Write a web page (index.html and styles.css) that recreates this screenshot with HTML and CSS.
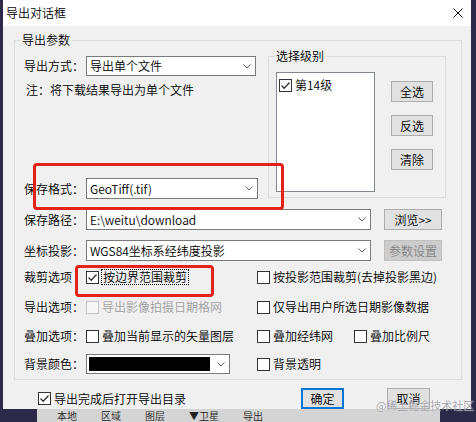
FILE: index.html
```html
<!DOCTYPE html>
<html lang="zh-CN">
<head>
    <meta charset="UTF-8">
    <meta name="viewport" content="width=device-width, initial-scale=1.0">
    <title>导出对话框</title>
    <link rel="stylesheet" href="styles.css">
</head>
<body>
    <div class="window">
        <div class="titlebar">
            <span class="title">导出对话框</span>
            <svg class="close" viewBox="0 0 10 10"><path d="M0.5 0.5L9.5 9.5M9.5 0.5L0.5 9.5"/></svg>
        </div>
        <div class="content">
            <fieldset class="group main-group">
                <legend>导出参数</legend>
                <div class="top">
                    <div class="top-left">
                        <div class="row row-mode">
                            <span class="label">导出方式：</span>
                            <div class="combo combo-mode">
                                <span>导出单个文件</span>
                                <svg class="arrow" viewBox="0 0 8 5"><polyline points="0.5,0.5 4,4 7.5,0.5"/></svg>
                            </div>
                        </div>
                        <div class="note">注：将下载结果导出为单个文件</div>
                        <div class="row row-format">
                            <span class="label">保存格式：</span>
                            <div class="combo combo-format">
                                <span>GeoTiff(.tif)</span>
                                <svg class="arrow" viewBox="0 0 8 5"><polyline points="0.5,0.5 4,4 7.5,0.5"/></svg>
                            </div>
                        </div>
                    </div>
                    <fieldset class="group level-group">
                        <legend>选择级别</legend>
                        <div class="level-body">
                            <div class="listbox">
                                <label class="check">
                                    <span class="box"><svg viewBox="0 0 11 11"><polyline points="1.5,5.5 4.2,8.2 9.5,2.5"/></svg></span>
                                    <span>第14级</span>
                                </label>
                            </div>
                            <div class="level-buttons">
                                <button class="btn">全选</button>
                                <button class="btn">反选</button>
                                <button class="btn">清除</button>
                            </div>
                        </div>
                    </fieldset>
                </div>

                <div class="row row-path">
                    <span class="label">保存路径：</span>
                    <div class="combo combo-wide">
                        <span>E:\weitu\download</span>
                        <svg class="arrow" viewBox="0 0 8 5"><polyline points="0.5,0.5 4,4 7.5,0.5"/></svg>
                    </div>
                    <button class="btn btn-side">浏览&gt;&gt;</button>
                </div>

                <div class="row row-proj">
                    <span class="label">坐标投影：</span>
                    <div class="combo combo-wide">
                        <span>WGS84坐标系经纬度投影</span>
                        <svg class="arrow" viewBox="0 0 8 5"><polyline points="0.5,0.5 4,4 7.5,0.5"/></svg>
                    </div>
                    <button class="btn btn-side" disabled>参数设置</button>
                </div>

                <div class="row row-clip">
                    <span class="label">裁剪选项</span>
                    <label class="check opt-left">
                        <span class="box"><svg viewBox="0 0 11 11"><polyline points="1.5,5.5 4.2,8.2 9.5,2.5"/></svg></span>
                        <span class="focus">按边界范围裁剪</span>
                    </label>
                    <label class="check">
                        <span class="box"></span>
                        <span>按投影范围裁剪(去掉投影黑边)</span>
                    </label>
                </div>

                <div class="row row-export">
                    <span class="label">导出选项：</span>
                    <label class="check opt-left disabled">
                        <span class="box"></span>
                        <span>导出影像拍摄日期格网</span>
                    </label>
                    <label class="check">
                        <span class="box"></span>
                        <span>仅导出用户所选日期影像数据</span>
                    </label>
                </div>

                <div class="row row-overlay">
                    <span class="label">叠加选项：</span>
                    <label class="check opt-left">
                        <span class="box"></span>
                        <span>叠加当前显示的矢量图层</span>
                    </label>
                    <label class="check opt-grid">
                        <span class="box"></span>
                        <span>叠加经纬网</span>
                    </label>
                    <label class="check">
                        <span class="box"></span>
                        <span>叠加比例尺</span>
                    </label>
                </div>

                <div class="row row-bg">
                    <span class="label">背景颜色：</span>
                    <div class="combo combo-color">
                        <span class="swatch"></span>
                        <svg class="arrow" viewBox="0 0 8 5"><polyline points="0.5,0.5 4,4 7.5,0.5"/></svg>
                    </div>
                    <label class="check opt-bg">
                        <span class="box"></span>
                        <span>背景透明</span>
                    </label>
                </div>
            </fieldset>

            <div class="bottom">
                <label class="check open-dir">
                    <span class="box"><svg viewBox="0 0 11 11"><polyline points="1.5,5.5 4.2,8.2 9.5,2.5"/></svg></span>
                    <span>导出完成后打开导出目录</span>
                </label>
                <button class="btn btn-ok">确定</button>
                <button class="btn btn-cancel">取消</button>
            </div>
        </div>

        <div class="mark mark-format"></div>
        <div class="mark mark-clip"></div>
    </div>

    <div class="behind">
        <span>本地</span>
        <span>区域</span>
        <span>图层</span>
        <span>▼卫星</span>
        <span>导出</span>
    </div>

    <div class="watermark">@稀土掘金技术社区</div>
</body>
</html>
```

FILE: styles.css
```css
* {
    box-sizing: border-box;
}

body {
    margin: 0;
    width: 476px;
    height: 422px;
    overflow: hidden;
    position: relative;
    background-color: #2c2a48;
    font-family: "Noto Sans CJK SC", "Microsoft YaHei", sans-serif;
    font-size: 12px;
    font-weight: 350;
    line-height: 16px;
    color: #000;
}

.window {
    position: relative;
    margin-left: 3px;
    width: 468px;
    height: 409px;
    background-color: #f0f0f0;
}

.titlebar {
    height: 26px;
    background-color: #fff;
    display: flex;
    align-items: center;
    justify-content: space-between;
    padding: 0 8px 0 3px;
}

.close {
    width: 10px;
    height: 10px;
    stroke: #111;
    stroke-width: 1;
}

.content {
    padding: 6px 9px 0 11px;
}

fieldset.group {
    margin: 0;
    min-width: 0;
    border: 1px solid #dcdcdc;
}

legend {
    padding: 0 2px;
    line-height: 16px;
}

.main-group {
    padding: 0 8px 5px 9px;
}

.main-group > legend {
    margin-left: -4px;
}

.top {
    display: grid;
    grid-template-columns: 244px 178px;
}

.row {
    display: flex;
    align-items: center;
}

.label {
    width: 62px;
    flex: none;
    white-space: nowrap;
}

.combo {
    display: flex;
    align-items: center;
    justify-content: space-between;
    height: 21px;
    padding: 0 4px 0 3px;
    background-color: #fff;
    border: 1px solid #7a7a7a;
    white-space: nowrap;
}

.arrow {
    width: 8px;
    height: 5px;
    flex: none;
    fill: none;
    stroke: #606060;
    stroke-width: 1;
}

.row-mode {
    margin-top: 8px;
}

.combo-mode {
    width: 170px;
    height: 20px;
}

.note {
    margin-top: 6px;
    padding-left: 2px;
}

.row-format {
    margin-top: 80px;
}

.combo-format {
    width: 172px;
}

.level-group {
    height: 150px;
    padding: 8px 0 5px 7px;
}

.level-group > legend {
    margin-left: -2px;
}

.level-body {
    display: flex;
}

.listbox {
    width: 99px;
    height: 120px;
    padding: 4px 2px;
    background-color: #fff;
    border: 1px solid #828790;
}

.level-buttons {
    display: flex;
    flex-direction: column;
    gap: 13px;
    margin-left: 16px;
    padding-top: 9px;
}

.btn {
    width: 42px;
    height: 21px;
    padding: 0;
    font: inherit;
    color: #000;
    background-color: #e1e1e1;
    border: 1px solid #adadad;
}

.btn:disabled {
    color: #838383;
    background-color: #cccccc;
    border-color: #bfbfbf;
}

.check {
    display: flex;
    align-items: center;
    gap: 3px;
    white-space: nowrap;
}

.box {
    width: 13px;
    height: 13px;
    flex: none;
    display: flex;
    background-color: #fff;
    border: 1px solid #333;
}

.box svg {
    width: 11px;
    height: 11px;
    fill: none;
    stroke: #333;
    stroke-width: 1.3;
}

.check.disabled {
    color: #a0a0a0;
}

.check.disabled .box {
    border-color: #c4c4c4;
    background-color: #f7f7f7;
}

.focus {
    line-height: 14px;
    padding: 0 1px;
    margin-left: -1px;
    border: 1px dotted #000;
}

.row-path {
    margin-top: 10px;
}

.row-proj {
    margin-top: 10px;
}

.combo-wide {
    width: 285px;
}

.btn-side {
    width: 58px;
    margin-left: 13px;
}

.opt-left {
    width: 171px;
    flex: none;
}

.row-clip {
    margin-top: 8px;
}

.row-export {
    margin-top: 14px;
}

.row-overlay {
    margin-top: 13px;
}

.opt-grid {
    width: 97px;
    flex: none;
}

.row-bg {
    margin-top: 10px;
}

.combo-color {
    width: 144px;
    height: 20px;
    padding: 0 4px 0 2px;
}

.swatch {
    width: 121px;
    height: 14px;
    background-color: #000;
}

.opt-bg {
    margin-left: 27px;
}

.bottom {
    display: flex;
    align-items: center;
    height: 21px;
    margin-top: 8px;
    padding-left: 24px;
}

.open-dir {
    width: 263px;
    flex: none;
}

.btn-ok {
    width: 43px;
    border: 2px solid #0078d7;
}

.btn-cancel {
    width: 43px;
    margin-left: 43px;
}

.mark {
    position: absolute;
    border: 3px solid #e3221c;
    border-radius: 4px;
}

.mark-format {
    left: 30px;
    top: 163px;
    width: 251px;
    height: 47px;
}

.mark-clip {
    left: 72px;
    top: 265px;
    width: 139px;
    height: 32px;
}

.behind {
    display: flex;
    gap: 24px;
    margin-left: 37px;
    width: 403px;
    height: 13px;
    overflow: hidden;
    padding: 1px 0 0 20px;
    background-color: #d4d4d4;
    color: #222;
    font-size: 10px;
    line-height: 12px;
}

.watermark {
    position: absolute;
    left: 376px;
    top: 397px;
    font-size: 11px;
    color: rgba(130, 130, 140, 0.75);
    text-shadow: 0 0 1px #fff;
}
```
